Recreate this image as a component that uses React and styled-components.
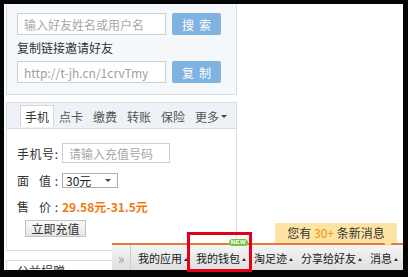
import React from "react";
import styled, { createGlobalStyle } from "styled-components";

const GlobalStyle = createGlobalStyle`
  html, body {
    margin: 0;
    padding: 0;
    background: #000;
  }
  body {
    font-family: "Noto Sans CJK SC", "Liberation Sans", sans-serif;
    font-size: 12px;
  }
`;

const Frame = styled.div`
  position: relative;
  width: 408px;
  height: 277px;
  box-sizing: border-box;
  padding: 4px 5px 7px 4px;
  background: #050505;
`;

const Viewport = styled.div`
  position: relative;
  width: 399px;
  height: 266px;
  background: #fff;
  overflow: hidden;
`;

const Column = styled.div`
  width: 231px;
  margin-left: 2px;
  display: flex;
  flex-direction: column;
`;

const Panel = styled.section`
  border: 1px solid #d6dde5;
  border-top: ${(p) => (p.$open ? "none" : "1px solid #d6dde5")};
  background: ${(p) => (p.$tint ? "#f5f8fb" : "#fff")};
  margin-top: ${(p) => p.$gap || 0}px;
`;

const SearchBody = styled.div`
  padding: 9px 10px 11px;
`;

const FieldRow = styled.div`
  display: flex;
  gap: 6px;
`;

const TextInput = styled.input`
  width: ${(p) => p.$w || 149}px;
  height: ${(p) => p.$h || 22}px;
  box-sizing: border-box;
  border: 1px solid #c8d0d8;
  padding: 0 6px;
  font: 12px "Noto Sans CJK SC", "Liberation Sans", sans-serif;
  color: #a0a0a0;
  background: #fff;
  outline: none;
  &::placeholder {
    color: #a8a8a8;
  }
`;

const BlueButton = styled.button`
  width: 49px;
  height: 22px;
  border: 0;
  border-radius: 2px;
  background: #80b2e2;
  color: #fff;
  font: 12px "Noto Sans CJK SC", sans-serif;
  letter-spacing: 5px;
  padding: 0 0 0 5px;
`;

const Caption = styled.div`
  margin: 4px 0;
  line-height: 18px;
  color: #333;
`;

const TabBar = styled.div`
  display: flex;
  height: 23px;
  padding: 2px 0 0 13px;
  background: #eef2f7;
  border-bottom: 1px solid #d6dde5;
`;

const Tab = styled.div`
  flex-shrink: 0;
  white-space: nowrap;
  height: 21px;
  line-height: 20px;
  padding: 0 4px;
  color: ${(p) => (p.$active ? "#333" : "#555")};
  background: ${(p) => (p.$active ? "#fff" : "transparent")};
  border: 1px solid ${(p) => (p.$active ? "#d0d8e0" : "transparent")};
  border-bottom: none;
  margin-bottom: -1px;
  display: flex;
  align-items: center;
  gap: 2px;
`;

const DownCaret = styled.span`
  width: 0;
  height: 0;
  border-left: 3px solid transparent;
  border-right: 3px solid transparent;
  border-top: 3px solid #444;
`;

const FormBody = styled.div`
  padding: 14px 10px 13px;
`;

const FormRow = styled.div`
  display: flex;
  align-items: center;
  height: 20px;
  margin-top: ${(p) => p.$gap || 0}px;
`;

const FieldLabel = styled.span`
  width: 41px;
  margin-right: 4px;
  color: #333;
  text-align: justify;
  text-align-last: justify;
`;

const FakeSelect = styled.div`
  width: 56px;
  height: 15px;
  box-sizing: border-box;
  border: 1px solid #a9b0b8;
  padding: 0 6px 0 3px;
  display: flex;
  align-items: center;
  justify-content: space-between;
  line-height: 13px;
  color: #222;
`;

const Price = styled.span`
  color: #f07a12;
  font-weight: bold;
`;

const GrayButton = styled.button`
  width: 61px;
  height: 17px;
  margin: 4px 0 0 8px;
  padding: 0;
  border: 1px solid #bfc3c7;
  background: linear-gradient(#fbfbfb, #e4e4e4);
  font: 12px "Noto Sans CJK SC", sans-serif;
  line-height: 15px;
  color: #333;
`;

const PanelTitle = styled.div`
  padding: 3px 10px;
  line-height: 14px;
  color: #333;
`;

const Bar = styled.div`
  position: absolute;
  left: 108px;
  right: 0;
  top: 239px;
  bottom: 0;
  border-top: 2px solid #e8793a;
  background: linear-gradient(#f6f6f6, #dedede);
  display: flex;
  align-items: center;
  z-index: 2;
`;

const Collapse = styled.div`
  width: 18px;
  align-self: stretch;
  border-right: 1px solid #cfcfcf;
  display: flex;
  align-items: center;
  justify-content: center;
  color: #999;
  font-size: 14px;
  margin-right: 3px;
`;

const BarItem = styled.div`
  position: relative;
  align-self: stretch;
  display: flex;
  align-items: center;
  gap: 2px;
  padding: 0 4px;
  font-size: 11px;
  color: #1a1a1a;
`;

const UpCaret = styled.span`
  width: 0;
  height: 0;
  margin-top: 3px;
  border-left: 2px solid transparent;
  border-right: 2px solid transparent;
  border-bottom: 3px solid #333;
`;

const NewBadge = styled.span`
  position: absolute;
  top: -6px;
  right: 2px;
  width: 19px;
  height: 7px;
  border-radius: 4px;
  background: #79c445;
  color: #fff;
  font: bold 6px/7px "Liberation Sans", sans-serif;
  text-align: center;
  letter-spacing: 0.5px;
`;

const Tip = styled.div`
  position: absolute;
  right: 6px;
  top: 219px;
  width: 122px;
  height: 20px;
  background: #fde3a4;
  line-height: 20px;
  text-align: center;
  color: #333;
  z-index: 3;
  &::after {
    content: "";
    position: absolute;
    left: 109px;
    top: 100%;
    border-left: 4px solid transparent;
    border-right: 4px solid transparent;
    border-top: 4px solid #fde3a4;
  }
`;

const Hot = styled.span`
  color: #f29300;
`;

const Highlight = styled.div`
  position: absolute;
  left: 187px;
  top: 232px;
  width: 65px;
  height: 40px;
  box-sizing: border-box;
  border: 3px solid #e2001b;
  pointer-events: none;
  z-index: 4;
`;

const tabs = ["手机", "点卡", "缴费", "转账", "保险"];
const barItems = [
  { label: "我的应用" },
  { label: "我的钱包", badge: true },
  { label: "淘足迹" },
  { label: "分享给好友" },
  { label: "消息" },
];

export default function App() {
  return (
    <>
      <GlobalStyle />
      <Frame>
        <Viewport>
          <Column>
            <Panel $open $tint>
              <SearchBody>
                <FieldRow>
                  <TextInput placeholder="输入好友姓名或用户名" />
                  <BlueButton>搜索</BlueButton>
                </FieldRow>
                <Caption>复制链接邀请好友</Caption>
                <FieldRow>
                  <TextInput readOnly defaultValue="http://t-jh.cn/1crvTmy" />
                  <BlueButton>复制</BlueButton>
                </FieldRow>
              </SearchBody>
            </Panel>

            <Panel $gap={7}>
              <TabBar>
                {tabs.map((t, i) => (
                  <Tab key={t} $active={i === 0}>
                    {t}
                  </Tab>
                ))}
                <Tab>
                  更多
                  <DownCaret />
                </Tab>
              </TabBar>
              <FormBody>
                <FormRow>
                  <FieldLabel>手机号:</FieldLabel>
                  <TextInput $w={108} $h={20} placeholder="请输入充值号码" />
                </FormRow>
                <FormRow $gap={7}>
                  <FieldLabel>面 值:</FieldLabel>
                  <FakeSelect>
                    30元
                    <DownCaret />
                  </FakeSelect>
                </FormRow>
                <FormRow $gap={6}>
                  <FieldLabel>售 价:</FieldLabel>
                  <Price>29.58元-31.5元</Price>
                </FormRow>
                <GrayButton>立即充值</GrayButton>
              </FormBody>
            </Panel>

            <Panel $gap={9}>
              <PanelTitle>公益捐赠</PanelTitle>
            </Panel>
          </Column>

          <Tip>
            您有 <Hot>30+</Hot> 条新消息
          </Tip>

          <Bar>
            <Collapse>»</Collapse>
            {barItems.map((item) => (
              <BarItem key={item.label}>
                {item.label}
                <UpCaret />
                {item.badge && <NewBadge>NEW</NewBadge>}
              </BarItem>
            ))}
          </Bar>
        </Viewport>
        <Highlight />
      </Frame>
    </>
  );
}
